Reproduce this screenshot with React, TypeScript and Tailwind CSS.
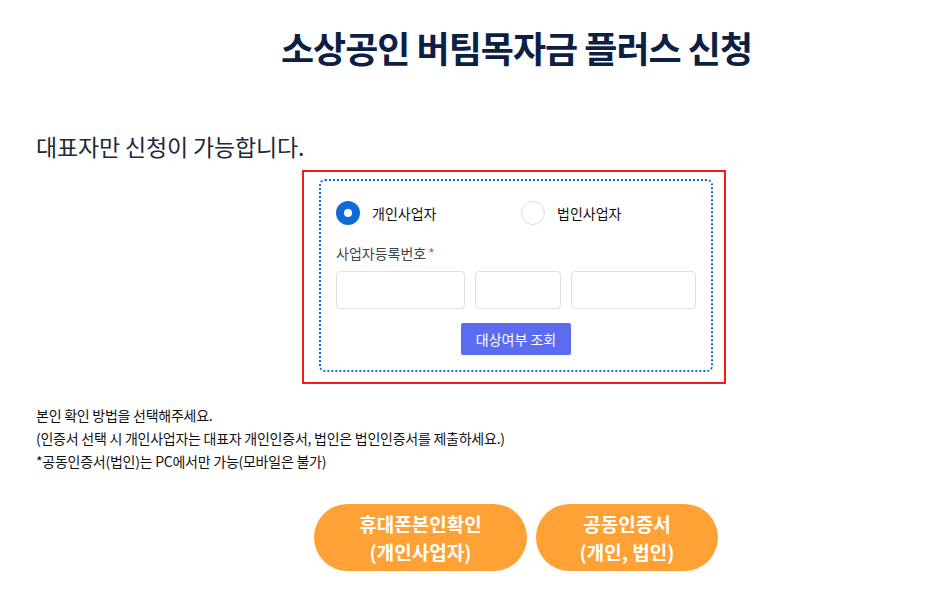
import React from 'react';

const font = { fontFamily: '"Noto Sans CJK KR", "Noto Sans", sans-serif' };

function Radio({ checked, label }: { checked?: boolean; label: string }) {
  return (
    <label className="flex items-center gap-3 cursor-pointer">
      {checked ? (
        <span className="w-6 h-6 rounded-full bg-[#0f6bd8] flex items-center justify-center">
          <span className="w-2 h-2 rounded-full bg-white" />
        </span>
      ) : (
        <span className="w-6 h-6 rounded-full border border-[#dddddd] bg-white" />
      )}
      <span className="text-[14px] text-[#111] leading-6">{label}</span>
    </label>
  );
}

export default function App() {
  return (
    <div className="w-[939px] min-h-[596px] bg-white text-[#222]" style={font}>
      <div className="pt-[21px] pl-[94px]">
        <h1 className="text-center text-[36px] font-bold tracking-[-1px] leading-[52px] text-[#0d1f45]">
          소상공인 버팀목자금 플러스 신청
        </h1>
      </div>

      <div className="px-[36px]">
        <p className="mt-[57px] text-[23px] leading-[32px] tracking-[-0.15px] text-[#1f2937]">대표자만 신청이 가능합니다.</p>

        <div className="mt-[8px] ml-[266px] w-[424px] border-2 border-[#ee1c1c] pt-[7px] pb-[10px] pl-[15px] pr-[11px]">
          <div className="w-[394px] border-2 border-dotted border-[#0f6bd8] rounded-[6px] px-[15px] pt-[20px] pb-[15px]">
            <div className="flex">
              <div className="w-[185px]">
                <Radio checked label="개인사업자" />
              </div>
              <Radio label="법인사업자" />
            </div>

            <div className="mt-[18px] text-[14px] leading-[20px] text-[#444]">
              사업자등록번호<span className="text-[#f0504a] ml-[2px]">*</span>
            </div>

            <div className="mt-[8px] flex gap-[10px]">
              <input className="w-[129px] h-[38px] border border-[#e0e0e0] rounded-[4px] outline-none" />
              <input className="w-[86px] h-[38px] border border-[#e0e0e0] rounded-[4px] outline-none" />
              <input className="w-[125px] h-[38px] border border-[#e0e0e0] rounded-[4px] outline-none" />
            </div>

            <div className="mt-[14px] flex justify-center">
              <button className="w-[110px] h-[32px] bg-[#5b6cf0] rounded-[2px] text-white text-[14px]">
                대상여부 조회
              </button>
            </div>
          </div>
        </div>

        <div className="mt-[20px] text-[14px] leading-[23px] tracking-[-0.25px] text-[#111]">
          <p>본인 확인 방법을 선택해주세요.</p>
          <p>(인증서 선택 시 개인사업자는 대표자 개인인증서, 법인은 법인인증서를 제출하세요.)</p>
          <p>*공동인증서(법인)는 PC에서만 가능(모바일은 불가)</p>
        </div>
      </div>

      <div className="mt-[31px] ml-[314px] flex gap-[9px]">
        <button className="w-[213px] h-[67px] rounded-full bg-[#ffa134] text-white font-bold text-[19px] leading-[28px]">
          휴대폰본인확인
          <br />
          (개인사업자)
        </button>
        <button className="w-[182px] h-[67px] rounded-full bg-[#ffa134] text-white font-bold text-[19px] leading-[28px]">
          공동인증서
          <br />
          (개인, 법인)
        </button>
      </div>
    </div>
  );
}
